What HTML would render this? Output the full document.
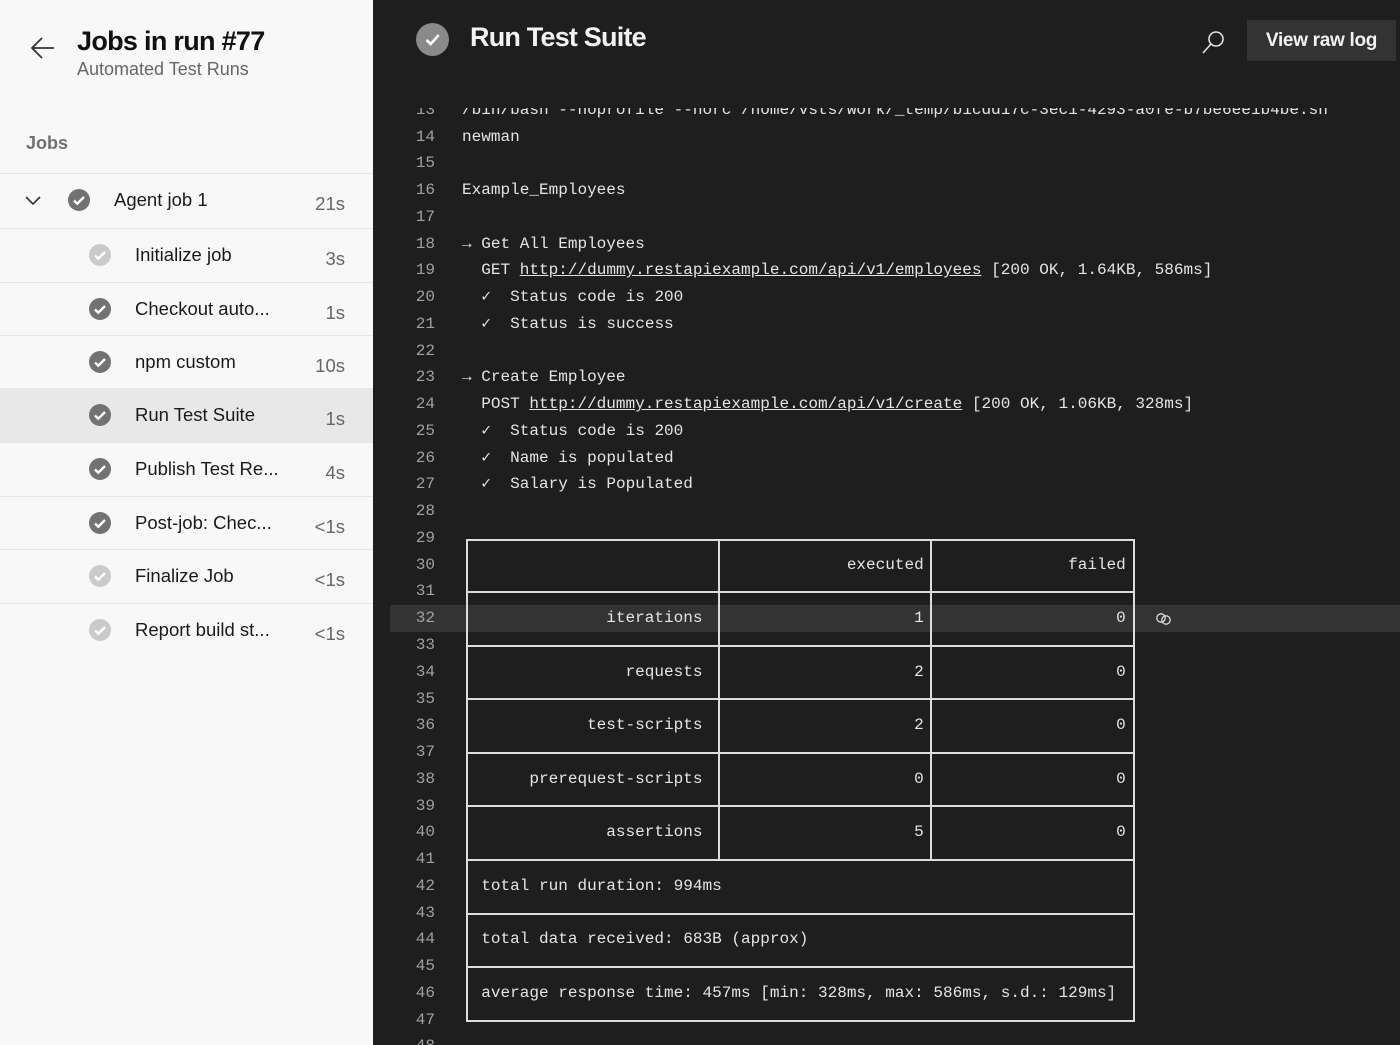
<!DOCTYPE html>
<html><head><meta charset="utf-8"><style>
*{margin:0;padding:0;box-sizing:border-box}
body{width:1400px;height:1045px;overflow:hidden;position:relative;background:#1e1e1e;font-family:"Liberation Sans",sans-serif}
#left{position:absolute;left:0;top:0;width:373px;height:1045px;background:#f8f8f8}
.t1{position:absolute;left:77px;top:26px;font-size:27px;font-weight:bold;color:#111;letter-spacing:-0.7px}
.t2{position:absolute;left:77px;top:59px;font-size:18px;color:#666}
.jobs{position:absolute;left:26px;top:133px;font-size:18px;font-weight:bold;color:#707070}
.row{position:absolute;left:0;width:373px;height:54px;border-top:1px solid #e6e6e6}
.row.sel{background:#e8e8e8}
.ic{position:absolute;width:22px;height:22px;border-radius:50%;background:#727272;top:15px}
.ic.l{background:#cacaca}
.ic svg{position:absolute;left:0;top:0}
.nm{position:absolute;top:15px;font-size:18.5px;color:#1a1a1a}
.du{position:absolute;right:28px;top:19px;font-size:18.5px;color:#666}
#hdr .c{position:absolute;left:416px;top:23px;width:33px;height:33px;border-radius:50%;background:#8a8a8a}
.ttl{position:absolute;left:470px;top:22px;font-size:27px;font-weight:bold;color:#f2f2f2;letter-spacing:-0.8px}
.btn{position:absolute;left:1247px;top:20px;width:149px;height:41px;background:#333;color:#f2f2f2;font-size:19px;font-weight:bold;text-align:center;line-height:41px;letter-spacing:-0.3px}
#log{position:absolute;left:390px;top:108px;width:1010px;height:937px;overflow:hidden}
#in{position:absolute;left:0;top:-8px;width:1010px;height:960px}
.ln{position:absolute;left:0;width:1010px;height:26.76px;font-family:"Liberation Mono",monospace;font-size:16.05px;line-height:26.76px;color:#e4e4e4;white-space:pre}
.ln .n{position:absolute;right:965px;color:#a0a0a0}
.ln .x{position:absolute;left:72px}
.ln a{color:#e4e4e4;text-decoration:underline}
.hl{background:#333}
.h{position:absolute;height:2px;background:#dcdcdc}
.v{position:absolute;width:2px;background:#dcdcdc}
</style></head><body>
<div id="left">
<svg style="position:absolute;left:30px;top:36px" width="26" height="24" viewBox="0 0 26 24"><path d="M24 12H3M12 2L2 12l10 10" stroke="#333" stroke-width="1.8" fill="none"/></svg>
<div class="t1">Jobs in run #77</div>
<div class="t2">Automated Test Runs</div>
<div class="jobs">Jobs</div>

<div class="row" style="top:173px"><svg style="position:absolute;left:25px;top:22px" width="16" height="10"><path d="M1 1l7 7 7-7" stroke="#333" stroke-width="1.6" fill="none"/></svg><div class="ic" style="left:68px"><svg width="22" height="22"><path d="M6 11.5l3.3 3.2L16 8" stroke="#fff" stroke-width="2.4" fill="none"/></svg></div><div class="nm" style="left:114px">Agent job 1</div><div class="du">21s</div></div>
<div class="row" style="top:228px"><div class="ic l" style="left:89px"><svg width="22" height="22"><path d="M6 11.5l3.3 3.2L16 8" stroke="#fff" stroke-width="2.4" fill="none"/></svg></div><div class="nm" style="left:135px">Initialize job</div><div class="du">3s</div></div>
<div class="row" style="top:282px"><div class="ic" style="left:89px"><svg width="22" height="22"><path d="M6 11.5l3.3 3.2L16 8" stroke="#fff" stroke-width="2.4" fill="none"/></svg></div><div class="nm" style="left:135px">Checkout auto...</div><div class="du">1s</div></div>
<div class="row" style="top:335px"><div class="ic" style="left:89px"><svg width="22" height="22"><path d="M6 11.5l3.3 3.2L16 8" stroke="#fff" stroke-width="2.4" fill="none"/></svg></div><div class="nm" style="left:135px">npm custom</div><div class="du">10s</div></div>
<div class="row sel" style="top:388px"><div class="ic" style="left:89px"><svg width="22" height="22"><path d="M6 11.5l3.3 3.2L16 8" stroke="#fff" stroke-width="2.4" fill="none"/></svg></div><div class="nm" style="left:135px">Run Test Suite</div><div class="du">1s</div></div>
<div class="row" style="top:442px"><div class="ic" style="left:89px"><svg width="22" height="22"><path d="M6 11.5l3.3 3.2L16 8" stroke="#fff" stroke-width="2.4" fill="none"/></svg></div><div class="nm" style="left:135px">Publish Test Re...</div><div class="du">4s</div></div>
<div class="row" style="top:496px"><div class="ic" style="left:89px"><svg width="22" height="22"><path d="M6 11.5l3.3 3.2L16 8" stroke="#fff" stroke-width="2.4" fill="none"/></svg></div><div class="nm" style="left:135px">Post-job: Chec...</div><div class="du">&lt;1s</div></div>
<div class="row" style="top:549px"><div class="ic l" style="left:89px"><svg width="22" height="22"><path d="M6 11.5l3.3 3.2L16 8" stroke="#fff" stroke-width="2.4" fill="none"/></svg></div><div class="nm" style="left:135px">Finalize Job</div><div class="du">&lt;1s</div></div>
<div class="row" style="top:603px"><div class="ic l" style="left:89px"><svg width="22" height="22"><path d="M6 11.5l3.3 3.2L16 8" stroke="#fff" stroke-width="2.4" fill="none"/></svg></div><div class="nm" style="left:135px">Report build st...</div><div class="du">&lt;1s</div></div>
</div>

<div id="hdr">
<div class="c"><svg width="33" height="33"><path d="M10.5 17l4.2 4 8-9" stroke="#fff" stroke-width="2.6" fill="none"/></svg></div>
<div class="ttl">Run Test Suite</div>
<svg style="position:absolute;left:1201px;top:29px" width="26" height="26" viewBox="0 0 26 26"><circle cx="15" cy="10" r="7" stroke="#e0e0e0" stroke-width="1.6" fill="none"/><path d="M10 15L2 24" stroke="#e0e0e0" stroke-width="1.6"/></svg>
<div class="btn">View raw log</div>
</div>

<div id="log"><div id="in">
<div class="ln" style="top:-3.2px"><span class="n">13</span><span class="x">/bin/bash --noprofile --norc /home/vsts/work/_temp/b1cdd17c-3ec1-4293-a0fe-b7be6ee1b4be.sh</span></div>
<div class="ln" style="top:23.56px"><span class="n">14</span><span class="x">newman</span></div>
<div class="ln" style="top:50.32px"><span class="n">15</span></div>
<div class="ln" style="top:77.08px"><span class="n">16</span><span class="x">Example_Employees</span></div>
<div class="ln" style="top:103.84px"><span class="n">17</span></div>
<div class="ln" style="top:130.6px"><span class="n">18</span><span class="x">→ Get All Employees</span></div>
<div class="ln" style="top:157.36px"><span class="n">19</span><span class="x">  GET <a>http://dummy.restapiexample.com/api/v1/employees</a> [200 OK, 1.64KB, 586ms]</span></div>
<div class="ln" style="top:184.12px"><span class="n">20</span><span class="x">  ✓  Status code is 200</span></div>
<div class="ln" style="top:210.88px"><span class="n">21</span><span class="x">  ✓  Status is success</span></div>
<div class="ln" style="top:237.64px"><span class="n">22</span></div>
<div class="ln" style="top:264.4px"><span class="n">23</span><span class="x">→ Create Employee</span></div>
<div class="ln" style="top:291.16px"><span class="n">24</span><span class="x">  POST <a>http://dummy.restapiexample.com/api/v1/create</a> [200 OK, 1.06KB, 328ms]</span></div>
<div class="ln" style="top:317.92px"><span class="n">25</span><span class="x">  ✓  Status code is 200</span></div>
<div class="ln" style="top:344.68px"><span class="n">26</span><span class="x">  ✓  Name is populated</span></div>
<div class="ln" style="top:371.44px"><span class="n">27</span><span class="x">  ✓  Salary is Populated</span></div>
<div class="ln" style="top:398.2px"><span class="n">28</span></div>
<div class="ln" style="top:424.96px"><span class="n">29</span></div>
<div class="ln" style="top:451.72px"><span class="n">30</span><span class="x">                                        executed               failed</span></div>
<div class="ln" style="top:478.48px"><span class="n">31</span></div>
<div class="ln hl" style="top:505.24px"><span class="n">32</span><span class="x">               iterations                      1                    0</span><svg style="position:absolute;left:764px;top:7px" width="20" height="14" viewBox="0 0 20 14"><circle cx="7" cy="6" r="4.2" stroke="#ddd" stroke-width="1.3" fill="none"/><circle cx="12" cy="8" r="4.2" stroke="#ddd" stroke-width="1.3" fill="none"/></svg></div>
<div class="ln" style="top:532px"><span class="n">33</span></div>
<div class="ln" style="top:558.76px"><span class="n">34</span><span class="x">                 requests                      2                    0</span></div>
<div class="ln" style="top:585.52px"><span class="n">35</span></div>
<div class="ln" style="top:612.28px"><span class="n">36</span><span class="x">             test-scripts                      2                    0</span></div>
<div class="ln" style="top:639.04px"><span class="n">37</span></div>
<div class="ln" style="top:665.8px"><span class="n">38</span><span class="x">       prerequest-scripts                      0                    0</span></div>
<div class="ln" style="top:692.56px"><span class="n">39</span></div>
<div class="ln" style="top:719.32px"><span class="n">40</span><span class="x">               assertions                      5                    0</span></div>
<div class="ln" style="top:746.08px"><span class="n">41</span></div>
<div class="ln" style="top:772.84px"><span class="n">42</span><span class="x">  total run duration: 994ms</span></div>
<div class="ln" style="top:799.6px"><span class="n">43</span></div>
<div class="ln" style="top:826.36px"><span class="n">44</span><span class="x">  total data received: 683B (approx)</span></div>
<div class="ln" style="top:853.12px"><span class="n">45</span></div>
<div class="ln" style="top:879.88px"><span class="n">46</span><span class="x">  average response time: 457ms [min: 328ms, max: 586ms, s.d.: 129ms]</span></div>
<div class="ln" style="top:906.64px"><span class="n">47</span></div>
<div class="ln" style="top:933.4px"><span class="n">48</span></div>

<div class="h" style="left:76px;top:439px;width:669px"></div>
<div class="h" style="left:76px;top:491px;width:669px"></div>
<div class="h" style="left:76px;top:545px;width:669px"></div>
<div class="h" style="left:76px;top:598px;width:669px"></div>
<div class="h" style="left:76px;top:652px;width:669px"></div>
<div class="h" style="left:76px;top:705px;width:669px"></div>
<div class="h" style="left:76px;top:759px;width:669px"></div>
<div class="h" style="left:76px;top:813px;width:669px"></div>
<div class="h" style="left:76px;top:866px;width:669px"></div>
<div class="h" style="left:76px;top:920px;width:669px"></div>
<div class="v" style="left:76px;top:439px;height:483px"></div>
<div class="v" style="left:743px;top:439px;height:483px"></div>
<div class="v" style="left:328px;top:439px;height:322px"></div>
<div class="v" style="left:540px;top:439px;height:322px"></div>
</div></div>
</body></html>
